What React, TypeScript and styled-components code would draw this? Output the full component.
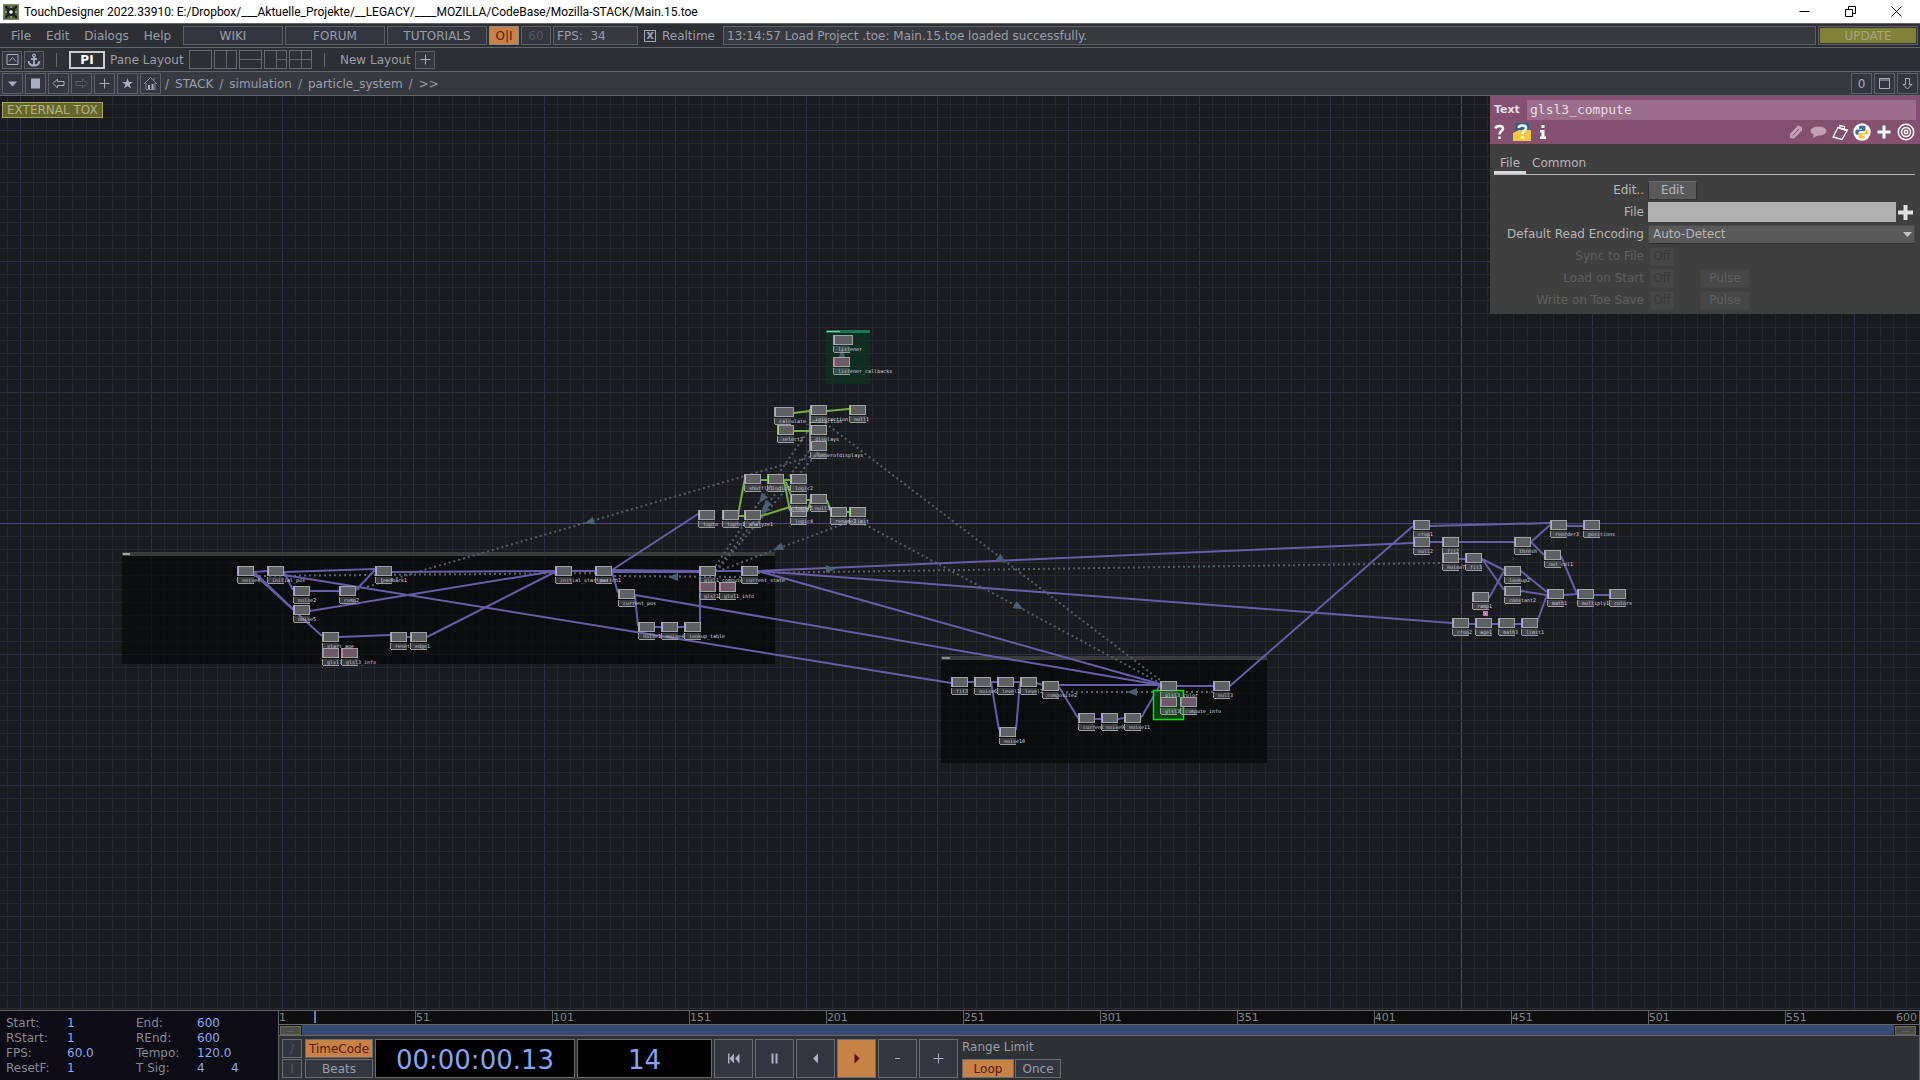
import React from "react";
import styled, { createGlobalStyle, css } from "styled-components";

const GlobalStyle = createGlobalStyle`
  * { box-sizing: border-box; }
  html, body, #root { height: 100%; }
  body { margin: 0; background: #1a1b1f; overflow: hidden; }
  button, input, select { font: inherit; color: inherit; margin: 0; border-radius: 0; }
  button { padding: 0; background: none; border: 0; }
`;

const line = "#62656a";
const ink = "#9a9eaa";

const App = styled.div`
  display: flex;
  flex-direction: column;
  height: 100vh;
  font: 12px/16px "DejaVu Sans", Verdana, sans-serif;
  color: ${ink};
`;

/* ---------- window title ---------- */
const TitleBar = styled.header`
  display: flex;
  align-items: center;
  height: 23px;
  padding: 0 10px 0 3px;
  gap: 5px;
  background: #fff;
  color: #000;
  font: 12px/16px Roboto, "Open Sans", sans-serif;
`;
const WindowTitle = styled.h1`
  flex: 1;
  margin: 0;
  font: inherit;
`;
const WindowButtons = styled.div`
  display: flex;
  gap: 22px;
  padding-right: 2px;
`;
const WindowButton = styled.button`
  width: 24px;
  height: 20px;
  display: grid;
  place-items: center;
`;

/* ---------- bars ---------- */
const Bar = styled.div<{ $tone?: "light" }>`
  display: flex;
  align-items: center;
  gap: 2px;
  height: 24px;
  padding: 0 2px;
  border-top: 1px solid ${line};
  background: ${(p) => (p.$tone === "light" ? "#373941" : "#2d2f33")};
`;
const PathBar = styled(Bar)`
  height: 25px;
  border-bottom: 1px solid ${line};
`;
const MenuList = styled.nav`
  display: flex;
  width: 179px;
  padding-left: 9px;
  gap: 15px;
`;
const boxed = css`
  border: 1px solid #5d6069;
  background: #33363f;
  display: grid;
  place-items: center;
`;
const BarButton = styled.button<{ $w: number; $on?: boolean; $dim?: boolean }>`
  ${boxed}
  width: ${(p) => p.$w}px;
  height: 19px;
  ${(p) => p.$on && "background: #c78345; color: #5a1408; border-color: #8a8a88;"}
  ${(p) => p.$dim && "color: #555861;"}
`;
const ReadOut = styled.output<{ $w?: number }>`
  display: block;
  ${(p) => (p.$w ? `width: ${p.$w}px;` : "flex: 1;")}
  height: 19px;
  padding: 1px 3px;
  border: 1px solid #5d6069;
  background: #38393e;
  white-space: pre;
`;
const Realtime = styled.label`
  display: flex;
  align-items: center;
  gap: 6px;
  width: 81px;
  padding-left: 4px;
`;
const Tick = styled.input`
  appearance: none;
  width: 12px;
  height: 12px;
  border: 1px solid #a5a8b3;
  display: grid;
  place-items: center;
  &:checked::before {
    content: "x";
    font: bold 12px/8px "DejaVu Sans", sans-serif;
    height: 10px;
  }
`;
const UpdateButton = styled.button`
  width: 100px;
  height: 19px;
  background: #7f8237;
  border: 1px solid #5d6069;
  outline: 1px solid #35373d;
  outline-offset: -2px;
  color: #a5a67c;
`;
const IconButton = styled.button<{ $dim?: boolean }>`
  ${boxed}
  width: 21px;
  height: 21px;
  color: ${(p) => (p.$dim ? "#5b5e68" : "#a9aebf")};
`;
const SmallIconButton = styled(IconButton)`
  width: 20px;
  height: 18px;
`;
const Divider = styled.span`
  width: 1px;
  height: 14px;
  margin: 0 10px;
  background: #6a6d73;
`;
const PaneIndex = styled.button`
  width: 36px;
  height: 18px;
  border: 2px solid #c9cbcf;
  color: #fff;
  font-weight: bold;
  line-height: 14px;
`;
const BarText = styled.span<{ $w: number }>`
  width: ${(p) => p.$w}px;
  padding-left: 3px;
  white-space: nowrap;
`;
const LayoutButton = styled.button`
  width: 23px;
  height: 19px;
  border: 1px solid #66696e;
  color: #66696e;
  display: grid;
`;
const Path = styled.div`
  flex: 1;
  display: flex;
  gap: 6px;
  padding-left: 2px;
`;

/* ---------- network canvas ---------- */
const Network = styled.main`
  position: relative;
  flex: 1;
  min-height: 0;
  overflow: hidden;
  background: #1a1b1f;
`;
const Wires = styled.svg`
  position: absolute;
  inset: 0;
  width: 100%;
  height: 100%;
`;
const Tox = styled.span`
  position: absolute;
  left: 2px;
  top: 6px;
  padding: 0 4px;
  height: 16px;
  line-height: 14px;
  border: 1px solid #a5a662;
  background: #65672a;
  color: #b3b480;
`;
const Op = styled.div<{ $kind?: string }>`
  position: absolute;
  width: ${(p) => (p.$kind === "comp" ? 20 : 17)}px;
  height: 10px;
  border: 1px solid #a0a2a6;
  background: ${(p) => (p.$kind === "pink" ? "#6c5a66" : "#5f6063")};
  box-shadow: inset 1px 0 0 ${(p) =>
    p.$kind === "chop" ? "#a9d67c" : p.$kind === "pink" ? "#c07aa0" : "#b3a8dd"};
`;
const OpName = styled.span`
  position: absolute;
  left: -1px;
  top: 10px;
  padding-left: 4px;
  border-left: 1px solid #9a9b9e;
  font: 5px/6px "DejaVu Sans Mono", monospace;
  color: #dcdde0;
  white-space: nowrap;
  &::before {
    content: "";
    position: absolute;
    left: 0;
    top: 0;
    width: 16px;
    height: 6px;
    border-bottom: 1px solid #9a9b9e;
    background: #9a9b9e50;
  }
`;

/* ---------- parameter window ---------- */
const Params = styled.aside`
  position: absolute;
  top: 0;
  right: 0;
  width: 430px;
  padding-bottom: 3px;
  background: #3f3f3f;
  color: #b6b6b6;
`;
const ParamsHead = styled.div`
  height: 48px;
  padding: 4px 4px 0;
  background: #83506f;
  color: #e8dfe5;
`;
const NameRow = styled.label`
  display: flex;
  align-items: center;
  font-size: 11px;
  font-weight: bold;
`;
const NameLabel = styled.span`
  width: 33px;
`;
const NameField = styled.input`
  flex: 1;
  min-width: 0;
  height: 20px;
  padding: 0 3px;
  border: 0;
  background: #9b6d8b;
  color: #eadfe6;
  font: 13px/20px "DejaVu Sans Mono", monospace;
`;
const HeadIcons = styled.div`
  display: flex;
  align-items: center;
  justify-content: space-between;
  height: 24px;
  padding-right: 1px;
`;
const IconGroup = styled.div<{ $gap: number }>`
  display: flex;
  align-items: center;
  gap: ${(p) => p.$gap}px;
`;
const HeadIcon = styled.button<{ $w?: number }>`
  width: ${(p) => p.$w ?? 18}px;
  height: 18px;
  display: grid;
  place-items: center;
  color: #fff;
`;
const Tabs = styled.div`
  display: flex;
  margin: 9px 5px 4px 4px;
  border-bottom: 1px solid #b6b6b6;
`;
const Tab = styled.button<{ $on?: boolean }>`
  height: 21px;
  padding: 2px 6px 0;
  border-bottom: 3px solid ${(p) => (p.$on ? "#d6d6d6" : "transparent")};
`;
const ParamRow = styled.div<{ $off?: boolean }>`
  display: flex;
  align-items: center;
  height: 22px;
  padding-right: 5px;
  ${(p) => p.$off && "color: #5f5f5f;"}
`;
const ParamLabel = styled.label`
  width: 158px;
  padding-right: 4px;
  text-align: right;
`;
const ParamButton = styled.button<{ $w: number }>`
  width: ${(p) => p.$w}px;
  height: 19px;
  background: #595959;
  border: 1px solid #333;
  border-top-color: #6a6a6a;
  &:disabled {
    background: #474747;
    border-color: #434343;
    color: #5f5f5f;
  }
`;
const OffButton = styled(ParamButton)`
  margin-left: 2px;
  margin-right: 26px;
  &:disabled {
    color: #383838;
  }
`;
const FileField = styled.input`
  flex: 1;
  min-width: 0;
  height: 20px;
  border: 0;
  background: #b1b1b1;
  color: #222;
`;
const PlusButton = styled.button`
  width: 19px;
  height: 20px;
  display: grid;
  place-items: center;
`;
const SelectWrap = styled.div`
  position: relative;
  flex: 1;
  display: flex;
`;
const Encoding = styled.select`
  appearance: none;
  flex: 1;
  height: 19px;
  padding: 0 4px;
  background: #595959;
  border: 1px solid #4a4a4a;
  border-bottom-color: #2c2c2c;
`;
const SelectArrow = styled.svg`
  position: absolute;
  right: 3px;
  top: 7px;
  pointer-events: none;
`;

/* ---------- timeline ---------- */
const Timeline = styled.footer`
  display: flex;
  height: 70px;
  border-top: 1px solid ${line};
  background: #2f3034;
`;
const Stats = styled.dl`
  width: 279px;
  margin: 0;
  padding: 4px 0 0 6px;
  display: grid;
  grid-template-columns: 61px 69px 61px 34px 1fr;
  grid-auto-rows: 15px;
  align-content: start;
  border-right: 1px solid ${line};
  background: #0c0b16;
  color: #858892;
`;
const Value = styled.dd`
  margin: 0;
  color: #8ea8ee;
`;
const Term = styled.dt<{ $col: number }>`
  grid-column: ${(p) => p.$col};
`;
const Transport = styled.div`
  flex: 1;
  min-width: 0;
  display: flex;
  flex-direction: column;
  border-right: 1px solid ${line};
`;
const Ruler = styled.div`
  position: relative;
  display: flex;
  height: 14px;
  background: #0d0d0d;
  border-bottom: 1px solid ${line};
  font-size: 11px;
  line-height: 14px;
  color: #83858a;
`;
const RulerStep = styled.span<{ $span: number; $first?: boolean }>`
  flex: ${(p) => p.$span} 1 0;
  min-width: 0;
  padding-right: 2px;
  border-left: ${(p) => (p.$first ? 0 : 1)}px solid ${line};
  display: flex;
  justify-content: space-between;
`;
const Playhead = styled.i`
  position: absolute;
  left: 35px;
  top: 0;
  width: 2px;
  height: 12px;
  background: #5d80bb;
`;
const Range = styled.div`
  display: flex;
  align-items: center;
  height: 11px;
  padding: 0 3px 0 1px;
  gap: 1px;
  background: #141518;
  border-bottom: 1px solid ${line};
`;
const Handle = styled.button`
  width: 21px;
  height: 9px;
  border: 1px solid #6c6a50;
  background: #4c4c4a;
  color: #777;
  font-size: 8px;
  line-height: 4px;
`;
const RangeFill = styled.span`
  flex: 1;
  height: 10px;
  background: #384a72;
`;
const Controls = styled.div`
  flex: 1;
  display: flex;
  gap: 2px;
  padding: 3px 3px 2px;
`;
const Stack = styled.div<{ $w: number }>`
  width: ${(p) => p.$w}px;
  display: flex;
  flex-direction: column;
  justify-content: space-between;
`;
const ModeButton = styled(BarButton)`
  border-color: #6a6c72;
`;
const Display = styled.output<{ $w: number }>`
  width: ${(p) => p.$w}px;
  height: 39px;
  padding-top: 2px;
  display: grid;
  place-items: center;
  border: 1px solid #6a6a6a;
  background: #000;
  color: #86a4f2;
  font-size: 26px;
  line-height: 32px;
`;
const PlayButton = styled.button<{ $on?: boolean }>`
  ${boxed}
  width: 39px;
  height: 39px;
  border-color: #6a6c72;
  color: #abb0c4;
  ${(p) => p.$on && "background: #c78345; color: #5a0c08;"}
`;
const Limit = styled(Stack)`
  padding-left: 2px;
  white-space: nowrap;
`;
const LimitButtons = styled.div`
  display: flex;
  gap: 1px;
`;

/* ---------- network data, in window pixels ---------- */
const ORIGIN_Y = 96;
const CELL = 13.1;
const AXIS_X = 1461;
const AXIS_Y = 523;

type OpDef = [number, number, string, string?];
const ops: OpDef[] = [
  [237, 566, "noise4"], [267, 566, "initial_pos"], [375, 566, "feedback1"],
  [293, 586, "noise2"], [339, 586, "comp2"], [293, 605, "noise5"],
  [322, 632, "start_age"], [390, 632, "reset"], [410, 632, "edge1"],
  [322, 648, "glsl3", "pink"], [341, 648, "glsl3_info", "pink"],
  [555, 566, "initial_startpos"], [595, 566, "switch1"], [699, 566, "glsl1_compute"],
  [741, 566, "current_state"], [618, 589, "current_pos"], [638, 622, "noise1"],
  [661, 622, "noise4"], [684, 622, "lookup_table"],
  [699, 582, "glsl1", "pink"], [719, 582, "glsl1_info", "pink"],
  [833, 335, "listener", "comp"], [833, 357, "listener_callbacks", "pink"],
  [774, 407, "calculate_interaction", "comp"], [810, 405, "interaction", "chop"],
  [849, 405, "null1", "chop"], [777, 425, "select3", "chop"], [810, 425, "displays", "chop"],
  [810, 441, "numberofdisplays", "chop"],
  [744, 474, "shuffle1", "chop"], [767, 474, "logic3", "chop"], [790, 474, "logic2", "chop"],
  [790, 507, "logic4", "chop"], [790, 494, "logic5", "chop"], [810, 494, "null3", "chop"],
  [698, 510, "topto", "chop"], [722, 510, "topto1", "chop"], [744, 510, "analyze1", "chop"],
  [830, 507, "rename2", "chop"], [849, 507, "limit", "chop"],
  [951, 677, "fit3"], [974, 677, "noise6"], [997, 677, "level1"], [1020, 677, "level2"],
  [1042, 681, "composite2"], [999, 727, "noise10"], [1078, 713, "current"],
  [1101, 713, "noise9"], [1124, 713, "noise11"], [1160, 681, "glsl3_color"],
  [1213, 681, "null3"], [1160, 697, "glsl3", "pink"], [1180, 697, "compute_info", "pink"],
  [1413, 520, "crop1"], [1550, 520, "reorder3"], [1583, 520, "positions"],
  [1413, 537, "null2"], [1442, 537, "fit2"], [1514, 537, "thresh"], [1442, 553, "noise7"],
  [1465, 553, "fit3"], [1544, 550, "out_col1"], [1504, 566, "lookup2"],
  [1504, 586, "constant2"], [1472, 592, "ramp1"], [1547, 589, "math1"],
  [1577, 589, "multiply1"], [1609, 589, "colors"], [1452, 618, "crop2"],
  [1475, 618, "age1"], [1498, 618, "math3"], [1521, 618, "limit1"],
];

type Seg = [number, number, number, number];
const topWires: Seg[] = [
  [254, 572, 267, 571], [284, 572, 375, 569], [284, 572, 293, 590], [310, 591, 339, 591],
  [356, 590, 375, 570], [392, 572, 555, 571], [254, 572, 293, 609], [254, 574, 322, 636],
  [339, 637, 390, 635], [407, 637, 410, 637], [427, 637, 555, 572], [310, 611, 555, 571],
  [284, 575, 951, 683],
  [572, 571, 595, 571], [612, 570, 699, 571], [612, 572, 699, 572], [716, 571, 741, 571],
  [612, 572, 618, 593], [635, 595, 638, 626], [655, 627, 661, 627], [678, 627, 684, 627],
  [700, 624, 700, 570], [612, 570, 698, 514], [635, 595, 1160, 685],
  [758, 571, 1413, 543], [758, 571, 1160, 684], [758, 571, 1452, 623],
  [968, 682, 974, 682], [991, 682, 997, 682], [1014, 682, 1020, 682], [1037, 683, 1042, 685],
  [991, 682, 999, 730], [1016, 730, 1020, 682], [1059, 685, 1160, 685], [1059, 687, 1078, 718],
  [1095, 719, 1101, 719], [1118, 719, 1124, 718], [1141, 718, 1160, 685],
  [1177, 686, 1213, 686], [1230, 686, 1413, 526],
  [1430, 526, 1550, 523], [1567, 526, 1583, 526], [1430, 542, 1442, 542],
  [1459, 542, 1514, 542], [1531, 542, 1550, 525], [1531, 542, 1544, 555],
  [1459, 559, 1465, 559], [1482, 559, 1504, 570], [1482, 559, 1504, 590],
  [1489, 598, 1504, 571], [1521, 571, 1547, 592], [1521, 591, 1547, 595],
  [1564, 595, 1577, 594], [1561, 556, 1577, 594], [1594, 595, 1609, 595],
  [1469, 624, 1475, 624], [1492, 624, 1498, 624], [1515, 624, 1521, 624],
  [1537, 622, 1547, 595],
];
const chopWires: Seg[] = [
  [794, 413, 810, 411], [827, 411, 849, 409], [794, 431, 810, 431],
  [810, 409, 810, 451], [761, 480, 767, 480], [784, 480, 790, 480],
  [738, 515, 745, 478], [739, 516, 744, 516], [761, 516, 790, 507],
  [784, 480, 790, 511], [786, 482, 792, 498], [807, 500, 810, 500],
  [827, 500, 831, 512], [847, 512, 849, 512], [807, 512, 811, 500],
];
const references: Seg[] = [
  [820, 454, 356, 590], [825, 423, 1160, 680], [860, 522, 1160, 683], [846, 523, 716, 572],
  [810, 428, 714, 568], [812, 447, 716, 570], [818, 452, 719, 568],
  [758, 573, 1442, 563], [741, 577, 611, 576], [611, 573, 254, 576], [1213, 692, 1059, 692],
];
const arrows: [number, number, number][] = [
  [589, 522, 164], [1002, 560, 37], [1019, 607, 28], [778, 548, 160], [762, 499, 125],
  [766, 506, 125], [764, 511, 125], [831, 569, 0], [673, 577, 180], [1132, 692, 180],
  [842, 354, 270],
];

const Segments = ({ list, color, dash, width }: { list: Seg[]; color: string; dash?: string; width: number }) => (
  <g stroke={color} strokeWidth={width} strokeDasharray={dash}>
    {list.map((s, i) => <line key={i} x1={s[0]} y1={s[1]} x2={s[2]} y2={s[3]} />)}
  </g>
);

const gridTone = (k: number) => (k === 0 ? "#45467f" : k % 10 === 0 ? "#303048" : "#282a2f");

const NetworkDrawing = () => {
  const steps = Array.from({ length: 400 }, (_, i) => i - 200);
  return (
    <Wires aria-hidden="true">
      <g transform={`translate(0 ${-ORIGIN_Y})`}>
        <rect x={826} y={330} width={44} height={54} fill="#102c22" />
        <g shapeRendering="crispEdges">
          {steps.map((k) => {
            const x = Math.round(AXIS_X + k * CELL);
            return <rect key={"v" + k} x={x} y={0} width={1} height={3000} fill={gridTone(k)} opacity={k % 10 ? 0.8 : 1} />;
          })}
          {steps.map((k) => {
            const y = Math.round(AXIS_Y + k * CELL);
            return <rect key={"h" + k} x={0} y={y} width={5000} height={1} fill={gridTone(k)} />;
          })}
        </g>
        <rect x={122} y={552} width={653} height={112} fill="#060607" opacity={0.7} />
        <rect x={941} y={656} width={326} height={107} fill="#060607" opacity={0.7} />
        <rect x={826} y={330} width={44} height={54} fill="#0c3020" opacity={0.5} />
        <rect x={122} y={552} width={653} height={4} fill="#3a3b3b" />
        <rect x={941} y={656} width={326} height={4} fill="#3a3a3b" />
        <rect x={123} y={553} width={7} height={2} fill="#a5a5a5" />
        <rect x={942} y={657} width={8} height={2} fill="#8a8a8a" />
        <rect x={826} y={330} width={44} height={3} fill="#1b7553" />
        <rect x={827} y={331} width={13} height={1} fill="#8fc7b0" />
        <Segments list={references} color="#55616b" dash="2 3" width={2} />
        <Segments list={topWires} color="#6a5da8" width={2} />
        <Segments list={chopWires} color="#72b03f" width={2} />
        {arrows.map(([x, y, a], i) => (
          <path key={i} d="M-5-4 5 0-5 4Z" fill="#4c5f70" transform={`translate(${x} ${y}) rotate(${a})`} />
        ))}
        <rect x={1483} y={611} width={5} height={5} fill="#d470a4" />
        <rect x={1485} y={613} width={1} height={1} fill="#fff" />
        <rect x={1153.5} y={690.5} width={30} height={29} fill="#0c4a14" fillOpacity={0.85} stroke="#10e01c" strokeWidth={1.5} />
      </g>
    </Wires>
  );
};

/* ---------- icons ---------- */
const Icon = ({ d, fill, size = 13 }: { d: string; fill?: boolean; size?: number }) => (
  <svg width={size} height={size} viewBox="0 0 13 13" fill={fill ? "currentColor" : "none"}
    stroke={fill ? "none" : "currentColor"} strokeWidth={1}>
    <path d={d} />
  </svg>
);
const PLUS = "M6.5 1.5v10M1.5 6.5h10";

const AppLogo = () => (
  <svg width="16" height="16" viewBox="0 0 16 16">
    <rect width="16" height="16" fill="#7d8a68" />
    <path d="M1.500 1.500h13v13h-13z" fill="#4a5340" />
    <path d="m2 2 12 12M14 2 2 14" stroke="#1d2218" strokeWidth="2" />
    <circle cx="8" cy="8" r="4" fill="#1d2218" />
    <circle cx="8" cy="8" r="1.800" fill="#fff" />
    <path d="M7.500 2h1v2h-1zM7.500 12h1v2h-1zM2 7.500h2v1H2zM12 7.500h2v1h-2z" fill="#c4cfae" />
  </svg>
);

const PythonMark = () => (
  <svg width="18" height="18" viewBox="0 0 18 18">
    <circle cx="9" cy="9" r="8.7" fill="#fff" />
    <path d="M9 2.5c-2.6 0-3 .9-3 2v1.3h3.2v.8H4.5C3 6.600 2.300 7.600 2.300 9.200s.7 2.600 2 2.600h1.200v-1.600c0-1.300 1-2.100 2.200-2.100h3c1 0 1.900-.8 1.900-1.800V4.500c0-1.300-1.200-2-3.600-2Z" fill="#3a6f9f" />
    <path d="M9 15.700c2.600 0 3-.9 3-2v-1.300H8.800v-.8h4.700c1.500 0 2.200-1 2.200-2.600s-.7-2.600-2-2.600h-1.200v1.500c0 1.300-1 2.100-2.200 2.100h-3c-1 0-1.900.8-1.900 1.800v1.900c0 1.300 1.200 2 3.600 2Z" fill="#f5c842" />
  </svg>
);

export default function TouchDesigner() {
  return (
    <App>
      <GlobalStyle />
      <TitleBar>
        <AppLogo />
        <WindowTitle>TouchDesigner 2022.33910: E:/Dropbox/___Aktuelle_Projekte/__LEGACY/____MOZILLA/CodeBase/Mozilla-STACK/Main.15.toe</WindowTitle>
        <WindowButtons>
          <WindowButton aria-label="Minimize"><Icon d="M1.5 6.500h10" /></WindowButton>
          <WindowButton aria-label="Restore"><Icon d="M1.5 4.500h7v7h-7zM4.500 4.500v-3h7v7h-3" /></WindowButton>
          <WindowButton aria-label="Close"><Icon d="m1.500 1.500 10 10m0-10-10 10" /></WindowButton>
        </WindowButtons>
      </TitleBar>

      <Bar>
        <MenuList>
          <button>File</button>
          <button>Edit</button>
          <button>Dialogs</button>
          <button>Help</button>
        </MenuList>
        <BarButton $w={100}>WIKI</BarButton>
        <BarButton $w={100}>FORUM</BarButton>
        <BarButton $w={100}>TUTORIALS</BarButton>
        <BarButton $w={30} $on>O|I</BarButton>
        <BarButton $w={30} $dim>60</BarButton>
        <ReadOut $w={85}>FPS:  34</ReadOut>
        <Realtime><Tick type="checkbox" defaultChecked />Realtime</Realtime>
        <ReadOut>13:14:57 Load Project .toe: Main.15.toe loaded successfully.</ReadOut>
        <UpdateButton>UPDATE</UpdateButton>
      </Bar>

      <Bar>
        <SmallIconButton aria-label="Palette"><Icon d="M1 1.500h11v10H1zM3 8.500l3.500-4 3.500 4" /></SmallIconButton>
        <SmallIconButton aria-label="Anchor">
          <svg width="14" height="14" viewBox="0 0 14 14" fill="none" stroke="currentColor" strokeWidth="1.800">
            <circle cx="7" cy="2.500" r="1.300" strokeWidth="1.200" />
            <path d="M7 4v8.500M4 6h6M1.500 8c.5 3 2.500 4.500 5.500 4.500s5-1.500 5.500-4.500" />
          </svg>
        </SmallIconButton>
        <Divider />
        <PaneIndex>PI</PaneIndex>
        <BarText $w={80}>Pane Layout</BarText>
        {["", "M11.500 0v17", "M0 8.500h21", "M11.500 0v17M11.500 8.500H21", "M11.500 0v17M0 8.500h21"].map((d, i) => (
          <LayoutButton key={i} aria-label={`Pane layout ${i + 1}`}>
            <svg width="21" height="17" fill="none" stroke="currentColor"><path d={d} /></svg>
          </LayoutButton>
        ))}
        <Divider />
        <BarText $w={76}>New Layout</BarText>
        <SmallIconButton aria-label="Add layout"><Icon d={PLUS} /></SmallIconButton>
      </Bar>

      <PathBar $tone="light">
        <IconButton aria-label="Pane type"><Icon fill d="M2 4.500h9l-4.500 5z" /></IconButton>
        <IconButton aria-label="Stop"><Icon fill d="M2 1.500h9v10H2z" /></IconButton>
        <IconButton aria-label="Back"><Icon d="M5.500 2 1 6.500l4.500 4.500V8.500H12v-4H5.500z" /></IconButton>
        <IconButton aria-label="Forward" $dim><Icon d="M7.500 2 12 6.500 7.500 11V8.500H1v-4h6.500z" /></IconButton>
        <IconButton aria-label="Add"><Icon d={PLUS} /></IconButton>
        <IconButton aria-label="Bookmarks"><Icon fill d="m6.500 1 1.400 3.900h4.100L8.700 7.400l1.300 4.100-3.500-2.500L3 11.500l1.300-4.100L1 4.900h4.100z" /></IconButton>
        <IconButton aria-label="Home" $dim>
          <svg width="15" height="15" viewBox="0 0 15 15" fill="none" stroke="#868a96">
            <path d="M1 8 7.500 1.500 14 8M3 7v6.500h9V7M11 4.500V2" />
            <path d="M5 9h2v4H5zM8.500 8h2v5h-2z" fill="#a9aebf" stroke="none" />
          </svg>
        </IconButton>
        <Path>
          <span>/</span><span>STACK</span><span>/</span><span>simulation</span>
          <span>/</span><span>particle_system</span><span>/</span><span>&gt;&gt;</span>
        </Path>
        <IconButton>0</IconButton>
        <IconButton aria-label="Maximize pane"><Icon d="M1.500 1.500h10v10h-10zM1.500 3h10" /></IconButton>
        <IconButton aria-label="Collapse"><Icon d="M4.500 1.500h4v6h2.500L6.500 12 2 7.500h2.500z" /></IconButton>
      </PathBar>

      <Network>
        <NetworkDrawing />
        {ops.map(([x, y, name, kind], i) => (
          <Op key={i} $kind={kind} style={{ left: x, top: y - ORIGIN_Y }}>
            <OpName>{name}</OpName>
          </Op>
        ))}
        <Tox>EXTERNAL TOX</Tox>

        <Params>
          <ParamsHead>
            <NameRow>
              <NameLabel>Text</NameLabel>
              <NameField defaultValue="glsl3_compute" />
            </NameRow>
            <HeadIcons>
              <IconGroup $gap={8}>
                <HeadIcon $w={11} aria-label="Help">
                  <svg width="11" height="16" viewBox="0 0 11 16" fill="none" stroke="currentColor" strokeWidth="2.500">
                    <path d="M1.500 4.500c.5-3.500 7.500-3.500 7.500 0 0 2.500-3.500 2.500-3.500 6M5.500 12.500V15" />
                  </svg>
                </HeadIcon>
                <HeadIcon aria-label="Python help">
                  <svg width="18" height="18" viewBox="0 0 18 18" fill="none">
                    <path d="M2 0h14v9H2z" fill="#35608c" />
                    <path d="M0 10 6 7h12v11H0z" fill="#f3c843" />
                    <path d="M5.500 5c.5-3.500 7.500-3.500 7.500 0 0 2.500-3.500 2.500-3.500 6M9.500 13v2.500" stroke="#fff" strokeWidth="2.500" />
                  </svg>
                </HeadIcon>
                <HeadIcon $w={8} aria-label="Info">
                  <svg width="8" height="16" viewBox="0 0 8 16" fill="currentColor">
                    <path d="M2.500 1h3v3h-3zM1 6h4.500v6.500H7V15H1v-2.500h1.500v-4H1z" />
                  </svg>
                </HeadIcon>
              </IconGroup>
              <IconGroup $gap={4}>
                <HeadIcon aria-label="Edit">
                  <svg width="16" height="16" viewBox="0 0 16 16">
                    <path d="M10 1.500 14 3v3.500L6 14.500 2 14v-4z" fill="#c3a0b6" />
                    <path d="M5 11.500 11 5" stroke="#83506f" />
                  </svg>
                </HeadIcon>
                <HeadIcon aria-label="Comment">
                  <svg width="17" height="14" viewBox="0 0 17 14" fill="#c3a0b6"><ellipse cx="8.500" cy="6" rx="8" ry="4.500" /><path d="m4 9-1 4 6-3z" /></svg>
                </HeadIcon>
                <HeadIcon aria-label="Copy">
                  <svg width="17" height="17" viewBox="0 0 17 17" fill="none" stroke="#fff" strokeWidth="1.300">
                    <path d="M6 3.500 1 13l9 2.500L15.500 6zM6.500 4l8.500 3M8 4V1.500l4.500 1V6" />
                  </svg>
                </HeadIcon>
                <HeadIcon aria-label="Python"><PythonMark /></HeadIcon>
                <HeadIcon aria-label="Add">
                  <svg width="14" height="14" viewBox="0 0 14 14" stroke="#fff" strokeWidth="3"><path d="M7 .5v13M.5 7h13" /></svg>
                </HeadIcon>
                <HeadIcon aria-label="Target">
                  <svg width="18" height="18" viewBox="0 0 18 18" fill="none" stroke="#fff" strokeWidth="1.500">
                    <circle cx="9" cy="9" r="7.700" /><circle cx="9" cy="9" r="4.500" /><circle cx="9" cy="9" r="1.700" />
                  </svg>
                </HeadIcon>
              </IconGroup>
            </HeadIcons>
          </ParamsHead>
          <Tabs>
            <Tab $on>File</Tab>
            <Tab>Common</Tab>
          </Tabs>
          <ParamRow>
            <ParamLabel htmlFor="edit">Edit..</ParamLabel>
            <ParamButton id="edit" $w={49}>Edit</ParamButton>
          </ParamRow>
          <ParamRow>
            <ParamLabel htmlFor="file">File</ParamLabel>
            <FileField id="file" />
            <PlusButton aria-label="Browse">
              <svg width="15" height="15" viewBox="0 0 15 15" stroke="#e0e0e0" strokeWidth="4"><path d="M7.500 0v15M0 7.500h15" /></svg>
            </PlusButton>
          </ParamRow>
          <ParamRow>
            <ParamLabel htmlFor="encoding">Default Read Encoding</ParamLabel>
            <SelectWrap>
              <Encoding id="encoding"><option>Auto-Detect</option></Encoding>
              <SelectArrow width="9" height="5"><path d="M0 0h9L4.500 5z" fill="#c4c4c4" /></SelectArrow>
            </SelectWrap>
          </ParamRow>
          <ParamRow $off>
            <ParamLabel htmlFor="sync">Sync to File</ParamLabel>
            <OffButton id="sync" $w={24} disabled>Off</OffButton>
          </ParamRow>
          <ParamRow $off>
            <ParamLabel htmlFor="load">Load on Start</ParamLabel>
            <OffButton id="load" $w={24} disabled>Off</OffButton>
            <ParamButton $w={50} disabled>Pulse</ParamButton>
          </ParamRow>
          <ParamRow $off>
            <ParamLabel htmlFor="write">Write on Toe Save</ParamLabel>
            <OffButton id="write" $w={24} disabled>Off</OffButton>
            <ParamButton $w={50} disabled>Pulse</ParamButton>
          </ParamRow>
        </Params>
      </Network>

      <Timeline>
        <Stats>
          <Term $col={1}>Start:</Term><Value>1</Value><Term $col={3}>End:</Term><Value>600</Value>
          <Term $col={1}>RStart:</Term><Value>1</Value><Term $col={3}>REnd:</Term><Value>600</Value>
          <Term $col={1}>FPS:</Term><Value>60.0</Value><Term $col={3}>Tempo:</Term><Value>120.0</Value>
          <Term $col={1}>ResetF:</Term><Value>1</Value><Term $col={3}>T Sig:</Term><Value>4</Value><Value>4</Value>
        </Stats>
        <Transport>
          <Ruler>
            {[1, 51, 101, 151, 201, 251, 301, 351, 401, 451, 501, 551].map((f) => (
              <RulerStep key={f} $span={f === 551 ? 49 : 50} $first={f === 1}>
                <span>{f}</span>
                {f === 551 && <span>600</span>}
              </RulerStep>
            ))}
            <Playhead />
          </Ruler>
          <Range>
            <Handle aria-label="Range start">...</Handle>
            <RangeFill />
            <Handle aria-label="Range end">...</Handle>
          </Range>
          <Controls>
            <Stack $w={21}>
              <ModeButton $w={20} $dim>/</ModeButton>
              <ModeButton $w={20} $dim>I</ModeButton>
            </Stack>
            <Stack $w={68}>
              <ModeButton $w={68} $on>TimeCode</ModeButton>
              <ModeButton $w={68}>Beats</ModeButton>
            </Stack>
            <Display $w={200}>00:00:00.13</Display>
            <Display $w={135}>14</Display>
            <PlayButton aria-label="Jump to start"><Icon fill d="M1 1.500h1.500v10H1zM7 1.500v10l-4.500-5zM12.500 1.500v10L8 6.500z" /></PlayButton>
            <PlayButton aria-label="Pause"><Icon fill d="M3.500 1.500h2v10h-2zM7.500 1.500h2v10h-2z" /></PlayButton>
            <PlayButton aria-label="Play reverse"><Icon fill d="M9 1.500v10L4 6.500z" /></PlayButton>
            <PlayButton aria-label="Play" $on><Icon fill d="M4.500 1.500v10l5-5z" /></PlayButton>
            <PlayButton aria-label="Step back"><Icon d="M4 6.500h5" /></PlayButton>
            <PlayButton aria-label="Step forward"><Icon d={PLUS} /></PlayButton>
            <Limit $w={101}>
              <span>Range Limit</span>
              <LimitButtons>
                <ModeButton $w={52} $on>Loop</ModeButton>
                <ModeButton $w={46}>Once</ModeButton>
              </LimitButtons>
            </Limit>
          </Controls>
        </Transport>
      </Timeline>
    </App>
  );
}
